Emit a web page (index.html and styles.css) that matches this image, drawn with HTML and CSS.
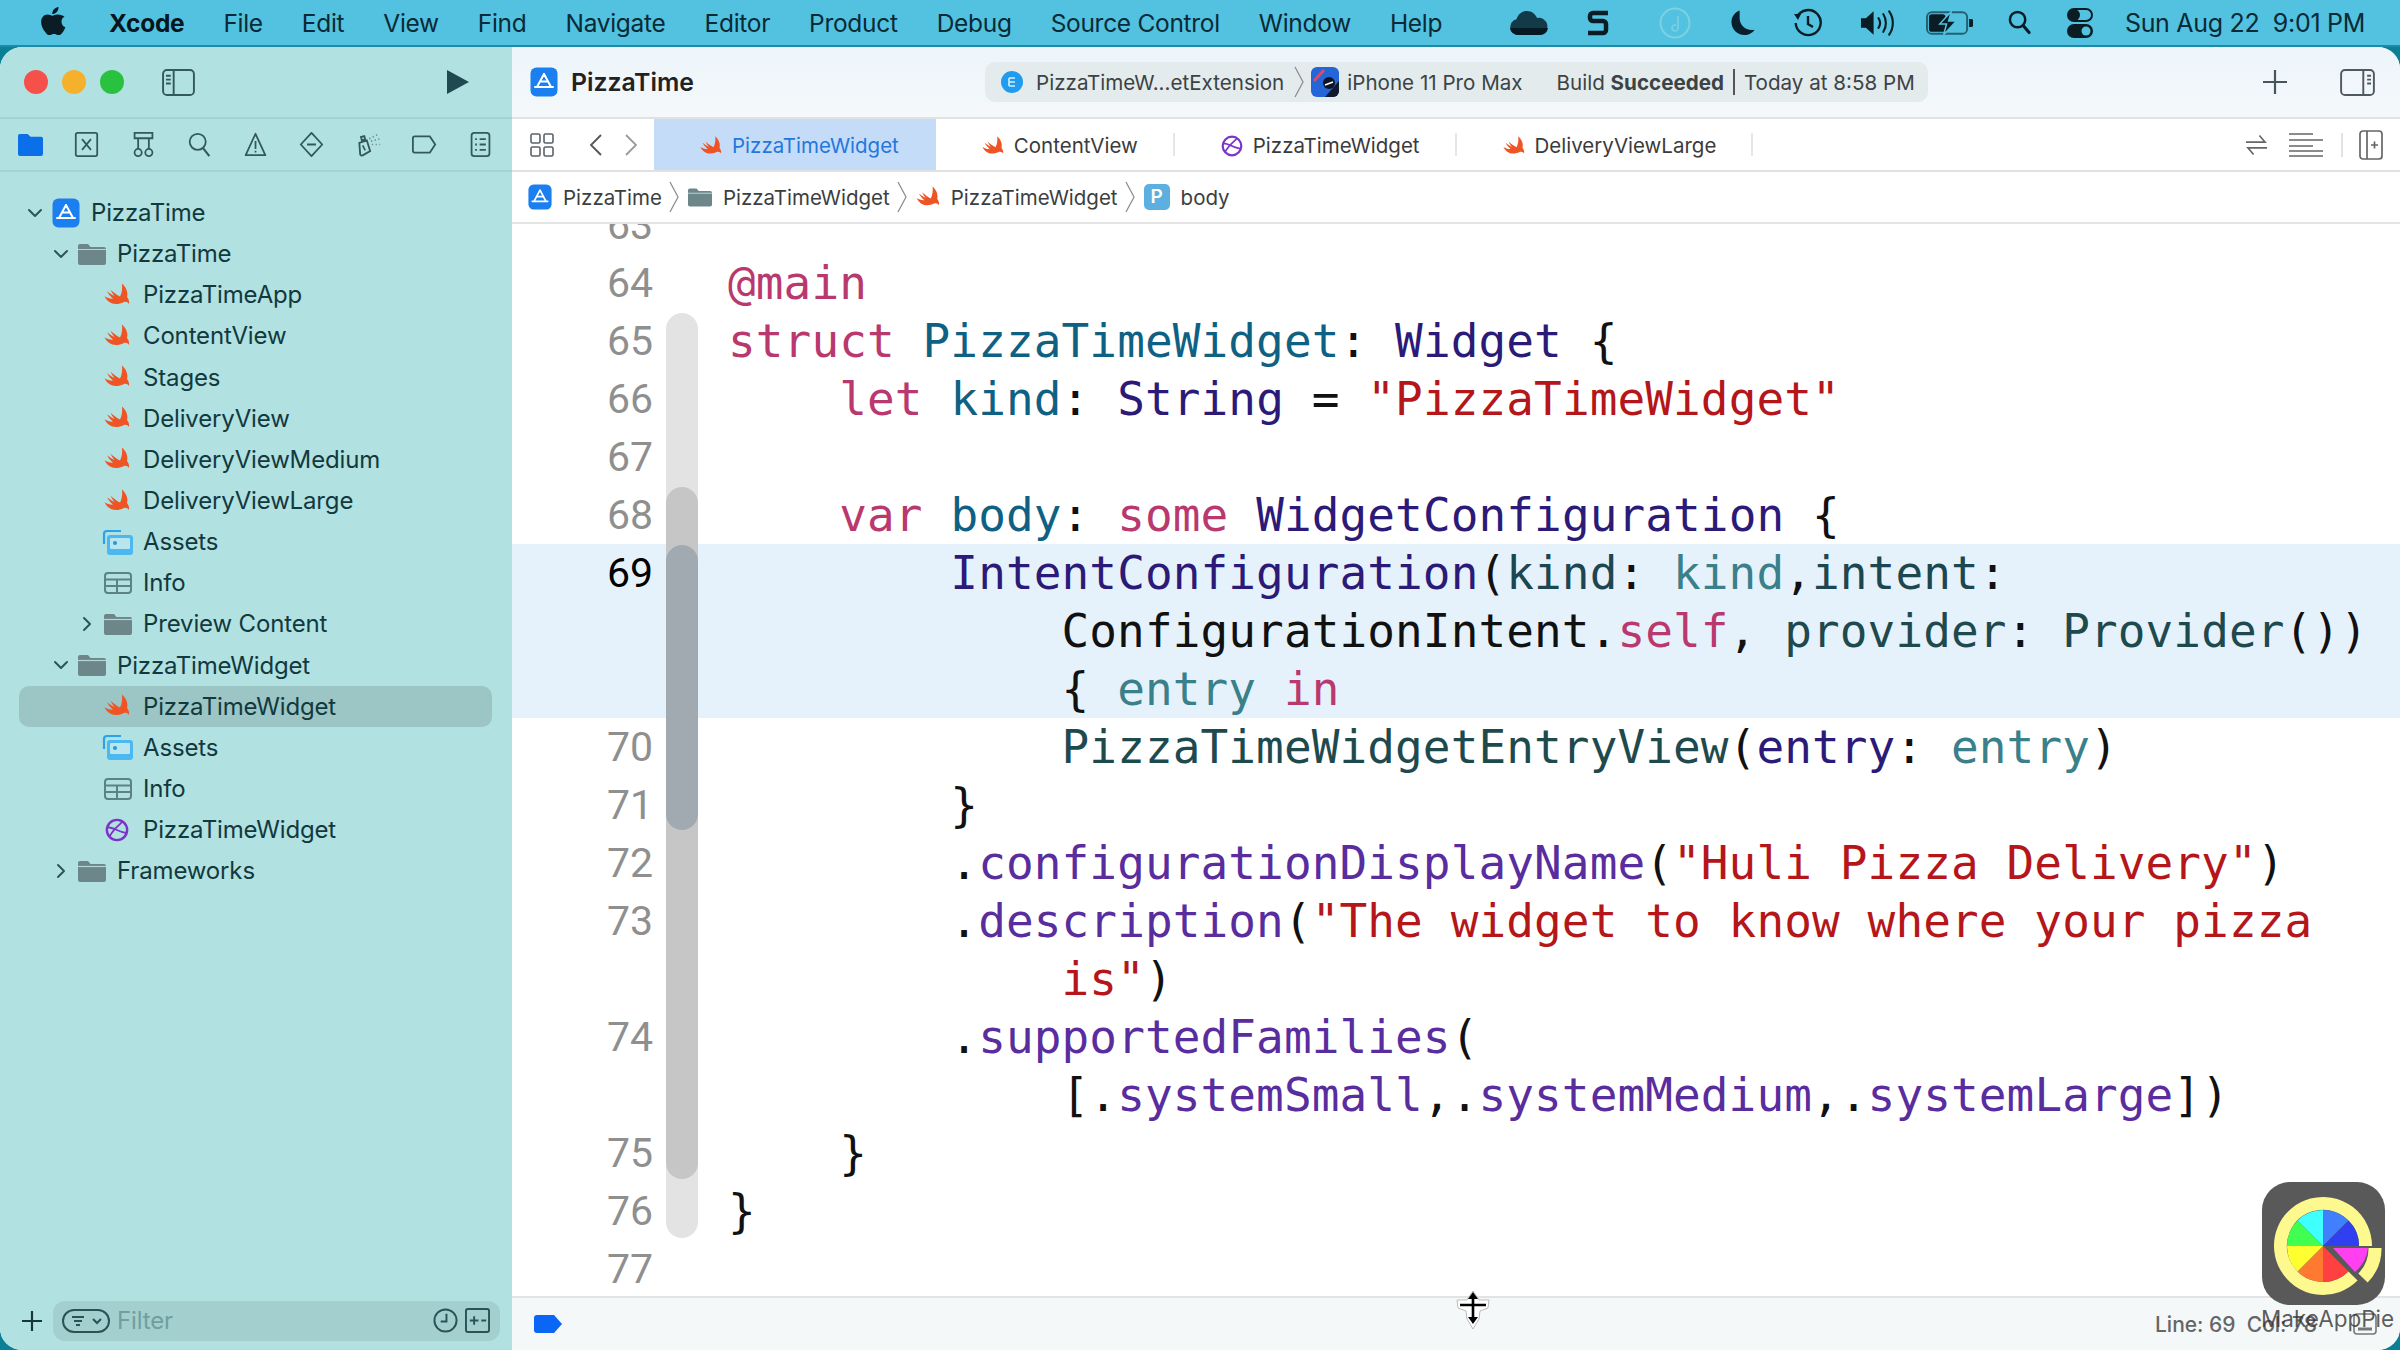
FILE: index.html
```html
<!DOCTYPE html>
<html lang="en">
<head>
    <meta charset="UTF-8">
    <link rel="stylesheet" href="styles.css">
    <title>PizzaTime - PizzaTimeWidget</title>
</head>
<body>
    <svg class="sprite" xmlns="http://www.w3.org/2000/svg">
        <symbol id="swift" viewBox="0 0 26 24">
            <path fill="#ee5424" d="M18 .5C22 4 24.500 9.500 23 14c1.500 2 2.500 4.500 2 7-1-2-3.500-2.800-5.500-1.800C15 21.500 9 21.800 5 18.800 3.200 17.400 1.800 15.600.5 13.200c2.500 1.600 5.500 2.600 8.500 2.400-2.500-2.100-4.500-4.600-6-7.300 2.500 2 5 3.700 7.500 4.900-1.700-2-3-4.200-4-6.400 3 2.700 6.300 5.200 9.500 6.800C18 10 18.500 5 18 .5z"/>
        </symbol>
        <symbol id="appicon" viewBox="0 0 28 30">
            <rect x="0.500" y="0.500" width="27" height="29" rx="6" fill="#1b7ff0"/>
            <path fill="none" stroke="#fff" stroke-width="2" stroke-linecap="round" d="M14 7l-7 13M14 7l7 13M5 20h18M10 14.500h8"/>
        </symbol>
        <symbol id="folder" viewBox="0 0 28 22">
            <path fill="#6d8689" d="M2 1h8l2.500 3H26a2 2 0 0 1 2 2v14a2 2 0 0 1-2 2H2a2 2 0 0 1-2-2V3a2 2 0 0 1 2-2z"/>
            <path fill="none" stroke="#b2d6d6" stroke-width="1.200" d="M0 6.500h28"/>
        </symbol>
        <symbol id="assets" viewBox="0 0 32 28">
            <path fill="none" stroke="#29a4ec" stroke-width="2.200" d="M2 16V6a3 3 0 0 1 3-3h14"/>
            <rect x="5" y="7" width="26" height="20" rx="3" fill="#4cb8f2"/>
            <rect x="8" y="10" width="20" height="11" rx="1" fill="#b8e5ee"/>
            <circle cx="13" cy="15" r="2" fill="#2795d8"/>
        </symbol>
        <symbol id="plist" viewBox="0 0 28 22">
            <rect x="1" y="1" width="26" height="20" rx="3" fill="none" stroke="#5c8286" stroke-width="2"/>
            <path fill="none" stroke="#5c8286" stroke-width="2" d="M1 7.500h26M1 14h26M13 7.500V21"/>
        </symbol>
        <symbol id="intent" viewBox="0 0 26 26">
            <circle cx="13" cy="13" r="11" fill="none" stroke="#7a34c8" stroke-width="2.600"/>
            <path fill="none" stroke="#7a34c8" stroke-width="2" d="M3 10c6 0 14 6 20 6M5 20C9 12 15 8 19 4"/>
        </symbol>
        <symbol id="chevdown" viewBox="0 0 16 10">
            <path fill="none" stroke="#2e5558" stroke-width="2" stroke-linecap="round" stroke-linejoin="round" d="M2 2l6 6 6-6"/>
        </symbol>
        <symbol id="chevright" viewBox="0 0 10 16">
            <path fill="none" stroke="#2e5558" stroke-width="2" stroke-linecap="round" stroke-linejoin="round" d="M2 2l6 6-6 6"/>
        </symbol>
        <symbol id="crumb" viewBox="0 0 10 32">
            <path fill="none" stroke="#8b8f91" stroke-width="1.300" d="M1 1l8 15-8 15"/>
        </symbol>
    </svg>

    <header class="menubar">
        <svg class="apple" viewBox="0 0 25 28"><path fill="#0a1d24" d="M17.500 0c.2 2-.6 3.700-1.700 5-1.200 1.300-2.800 2.200-4.500 2.100-.2-1.800.7-3.700 1.700-4.800C14.100 1 16 .1 17.500 0zM23.500 9.600c-1.700 1-3 2.900-3 5.100 0 2.700 1.600 4.600 3.900 5.500-.5 1.500-1.300 3-2.300 4.500-1.300 1.900-2.600 3.500-4.400 3.500-1.900 0-2.500-1.100-4.700-1.100s-2.900 1.100-4.600 1.100c-1.900 0-3.300-1.800-4.600-3.700C1.200 21.500 0 17.500.2 14.300.3 10.300 3 7.500 6.600 7.500c1.900 0 3.600 1.200 4.800 1.200 1.300 0 3.200-1.400 5.400-1.200 2.700.1 5 1.100 6.700 2.100z"/></svg>
        <nav class="menu">
            <span class="menu-app">Xcode</span>
            <span>File</span>
            <span>Edit</span>
            <span>View</span>
            <span>Find</span>
            <span>Navigate</span>
            <span>Editor</span>
            <span>Product</span>
            <span>Debug</span>
            <span>Source Control</span>
            <span>Window</span>
            <span>Help</span>
        </nav>
        <div class="status-icons">
            <svg class="si-cloud" viewBox="0 0 40 26"><path fill="#123a48" d="M9 25a8 8 0 0 1-1.500-15.800C9 4 13.500 1 18 1c4.600 0 8.400 2.800 10 7a8.500 8.500 0 0 1 3.500 17z"/><path fill="#061821" d="M9 25a8 8 0 0 1-8-7h38a8.500 8.500 0 0 1-7.500 7z"/></svg>
            <svg class="si-s" viewBox="0 0 22 26"><path fill="none" stroke="#0a1d24" stroke-width="4.500" stroke-linejoin="round" d="M21 3H6a3 3 0 0 0-3 3v2a3 3 0 0 0 3 3h10a3 3 0 0 1 3 3v6a3 3 0 0 1-3 3H1"/></svg>
            <svg class="si-music" viewBox="0 0 32 32"><circle cx="16" cy="16" r="14.500" fill="none" stroke="#7fd0e0" stroke-width="2"/><path fill="none" stroke="#7fd0e0" stroke-width="1.600" d="M19 9v12a3 3 0 1 1-2-2.800"/></svg>
            <svg class="si-moon" viewBox="0 0 26 28"><path fill="#07202c" d="M10 1C5 3 1.500 7.500 1.500 13c0 7.500 6 13.500 13.500 13.500 4.500 0 8.500-2.200 10.500-5.500-1 .3-2 .4-3 .4-7 0-12.500-5.500-12.500-12.500 0-2.800.1-5.300 0-7.900z"/></svg>
            <svg class="si-clock" viewBox="0 0 28 30"><path fill="none" stroke="#0a1d24" stroke-width="2.400" d="M3 9a12.500 12.500 0 1 1-1.300 6M14 8v8l5 3"/><path fill="#0a1d24" d="M0 6l7 0-3 6z"/></svg>
            <svg class="si-volume" viewBox="0 0 36 28"><path fill="#0a1d24" d="M1 9h5l8-7v24l-8-7H1z"/><path fill="none" stroke="#0a1d24" stroke-width="2.200" stroke-linecap="round" d="M19 9c2 3 2 7 0 10M24 5c3.500 5 3.500 13 0 18M30 2c5 7 5 17 0 24"/></svg>
            <svg class="si-battery" viewBox="0 0 48 26"><rect x="1" y="2" width="41" height="22" rx="5" fill="none" stroke="#24606f" stroke-width="2"/><rect x="3" y="4" width="17" height="18" rx="3" fill="#0a1d24"/><path fill="#0a1d24" d="M44 9h2a2 2 0 0 1 0 8h-2z"/><path fill="#0a1d24" stroke="#52c2e0" stroke-width="1.500" d="M26 1L14 14h7l-3 11 13-14h-8z"/></svg>
            <svg class="si-search" viewBox="0 0 24 26"><circle cx="10" cy="10" r="8" fill="none" stroke="#0a1d24" stroke-width="2.600"/><path stroke="#0a1d24" stroke-width="3.200" stroke-linecap="round" d="M16 16.500l6 7"/></svg>
            <svg class="si-control" viewBox="0 0 26 30"><rect x="1" y="1" width="24" height="12" rx="6" fill="none" stroke="#0a1d24" stroke-width="2"/><circle cx="7" cy="7" r="6" fill="#0a1d24"/><rect x="0" y="16" width="26" height="14" rx="7" fill="#0a1d24"/><circle cx="19" cy="23" r="4.500" fill="#52c2e0"/></svg>
            <span class="clock">Sun Aug 22&nbsp; 9:01 PM</span>
        </div>
    </header>

    <div class="window">
        <aside class="sidebar">
            <div class="side-toolbar">
                <div class="lights">
                    <i class="light red"></i>
                    <i class="light yellow"></i>
                    <i class="light green"></i>
                </div>
                <svg class="panel-btn" viewBox="0 0 34 28"><rect x="1" y="1" width="32" height="26" rx="4" fill="none" stroke="#33595c" stroke-width="2"/><path fill="none" stroke="#33595c" stroke-width="2" d="M12 1v26M4 7h5M4 11h5M4 15h5"/></svg>
                <svg class="play" viewBox="0 0 24 26"><path fill="#1f4a4f" d="M1 1l22 12L1 25z"/></svg>
            </div>
            <div class="nav-tabs">
                <svg viewBox="0 0 26 24"><path fill="#0a6fe8" d="M2 1h8l3 3h11a2 2 0 0 1 2 2v16a2 2 0 0 1-2 2H2a2 2 0 0 1-2-2V3a2 2 0 0 1 2-2z"/></svg>
                <svg viewBox="0 0 26 28"><rect x="1" y="1" width="24" height="26" rx="2" fill="none" stroke="#33595c" stroke-width="2"/><path fill="none" stroke="#33595c" stroke-width="2" d="M8 8l10 12M18 8L8 20"/></svg>
                <svg viewBox="0 0 26 28"><path fill="none" stroke="#33595c" stroke-width="2" d="M3 1h20v6H3zM7 7v12M19 7v12"/><circle cx="7" cy="23" r="4" fill="none" stroke="#33595c" stroke-width="2"/><circle cx="19" cy="23" r="4" fill="none" stroke="#33595c" stroke-width="2"/></svg>
                <svg viewBox="0 0 26 28"><circle cx="11" cy="11" r="9" fill="none" stroke="#33595c" stroke-width="2"/><path stroke="#33595c" stroke-width="2.400" d="M17 18l7 9"/></svg>
                <svg viewBox="0 0 26 28"><path fill="none" stroke="#33595c" stroke-width="2" stroke-linejoin="round" d="M13 2l11 24H2z"/><path stroke="#33595c" stroke-width="2" d="M13 10v9M13 21v2"/></svg>
                <svg viewBox="0 0 26 28"><path fill="none" stroke="#33595c" stroke-width="2" stroke-linejoin="round" d="M13 1l12 13-12 13L1 14z"/><path stroke="#33595c" stroke-width="2" d="M8 14h10"/></svg>
                <svg viewBox="0 0 30 28"><path fill="none" stroke="#33595c" stroke-width="2.200" d="M4 12l9-3 4 13-9 5a2 2 0 0 1-3-1.500zM7 9l4-1-1-4-4 1z"/><path stroke="#33595c" stroke-width="2" d="M8 15l3 6"/><path fill="none" stroke="#6b8f92" stroke-width="2" stroke-dasharray="1.500 3" d="M16 7l12-6M18 10l11-3M19 14l10 0"/></svg>
                <svg viewBox="0 0 28 24"><path fill="none" stroke="#33595c" stroke-width="2" d="M3 3h17l6 9-6 9H3a2 2 0 0 1-2-2V5a2 2 0 0 1 2-2z"/></svg>
                <svg viewBox="0 0 22 28"><rect x="1" y="1" width="20" height="26" rx="3" fill="none" stroke="#33595c" stroke-width="2"/><path stroke="#33595c" stroke-width="2" d="M5 8h2M5 14h2M5 20h2M10 8h7M10 14h7M10 20h7"/></svg>
            </div>
            <ul class="tree">
                <li class="row">
                    <span class="chev"><svg class="down"><use href="#chevdown"/></svg></span>
                    <svg class="ico ico-app"><use href="#appicon"/></svg>PizzaTime
                </li>
                <li class="row lvl1">
                    <span class="chev"><svg class="down"><use href="#chevdown"/></svg></span>
                    <svg class="ico ico-folder"><use href="#folder"/></svg>PizzaTime
                </li>
                <li class="row lvl2"><span class="chev"></span><svg class="ico"><use href="#swift"/></svg>PizzaTimeApp</li>
                <li class="row lvl2"><span class="chev"></span><svg class="ico"><use href="#swift"/></svg>ContentView</li>
                <li class="row lvl2"><span class="chev"></span><svg class="ico"><use href="#swift"/></svg>Stages</li>
                <li class="row lvl2"><span class="chev"></span><svg class="ico"><use href="#swift"/></svg>DeliveryView</li>
                <li class="row lvl2"><span class="chev"></span><svg class="ico"><use href="#swift"/></svg>DeliveryViewMedium</li>
                <li class="row lvl2"><span class="chev"></span><svg class="ico"><use href="#swift"/></svg>DeliveryViewLarge</li>
                <li class="row lvl2"><span class="chev"></span><svg class="ico ico-assets"><use href="#assets"/></svg>Assets</li>
                <li class="row lvl2"><span class="chev"></span><svg class="ico ico-folder"><use href="#plist"/></svg>Info</li>
                <li class="row lvl2">
                    <span class="chev"><svg class="right"><use href="#chevright"/></svg></span>
                    <svg class="ico ico-folder"><use href="#folder"/></svg>Preview Content
                </li>
                <li class="row lvl1">
                    <span class="chev"><svg class="down"><use href="#chevdown"/></svg></span>
                    <svg class="ico ico-folder"><use href="#folder"/></svg>PizzaTimeWidget
                </li>
                <li class="row lvl2 selected"><span class="chev"></span><svg class="ico"><use href="#swift"/></svg>PizzaTimeWidget</li>
                <li class="row lvl2"><span class="chev"></span><svg class="ico ico-assets"><use href="#assets"/></svg>Assets</li>
                <li class="row lvl2"><span class="chev"></span><svg class="ico ico-folder"><use href="#plist"/></svg>Info</li>
                <li class="row lvl2"><span class="chev"></span><svg class="ico"><use href="#intent"/></svg>PizzaTimeWidget</li>
                <li class="row lvl1">
                    <span class="chev"><svg class="right"><use href="#chevright"/></svg></span>
                    <svg class="ico ico-folder"><use href="#folder"/></svg>Frameworks
                </li>
            </ul>
            <div class="filter-bar">
                <svg class="filter-plus" viewBox="0 0 20 20"><path stroke="#16383c" stroke-width="2.200" d="M10 0v20M0 10h20"/></svg>
                <div class="filter-field">
                    <svg class="filter-pill" viewBox="0 0 48 24"><rect x="1" y="1" width="46" height="22" rx="11" fill="none" stroke="#2b5256" stroke-width="2"/><path stroke="#2b5256" stroke-width="2" d="M10 8h12M12 12h8M14 16h4"/><path fill="none" stroke="#2b5256" stroke-width="2" d="M31 10l4 4 4-4"/></svg>
                    <span class="filter-text">Filter</span>
                    <svg class="filter-clock" viewBox="0 0 26 26"><circle cx="13" cy="13" r="11.500" fill="none" stroke="#2b5256" stroke-width="2"/><path fill="none" stroke="#2b5256" stroke-width="2" d="M14 6v8H8"/></svg>
                    <svg class="filter-add" viewBox="0 0 26 26"><rect x="1" y="1" width="24" height="24" rx="2" fill="none" stroke="#2b5256" stroke-width="2"/><path stroke="#2b5256" stroke-width="2" d="M5 13h9M9.500 8.500v9M17 13h5"/></svg>
                </div>
            </div>
        </aside>

        <main class="main">
            <div class="toolbar">
                <div class="project">
                    <svg class="ico-app"><use href="#appicon"/></svg>
                    <span class="project-name">PizzaTime</span>
                </div>
                <div class="activity">
                    <svg class="ext-badge" viewBox="0 0 22 22"><circle cx="11" cy="11" r="11" fill="#1f9cf0"/><path stroke="#d6effc" stroke-width="1.600" d="M8 7h6M8 11h6M8 15h6M8 7v8"/></svg>
                    <span class="scheme">PizzaTimeW...etExtension</span>
                    <svg class="crumb"><use href="#crumb"/></svg>
                    <svg class="device" viewBox="0 0 28 30"><rect width="28" height="30" rx="6" fill="#2465d8"/><path fill="#111a2c" d="M14 30l14-16v10a6 6 0 0 1-6 6z"/><path stroke="#d64d6a" stroke-width="3" d="M3 14L13 3"/><circle cx="18" cy="16" r="6" fill="#0d1424"/><path stroke="#fff" stroke-width="1.500" d="M14 18l8-3"/></svg>
                    <span class="device-name">iPhone 11 Pro Max</span>
                    <span class="build">Build <b>Succeeded</b></span>
                    <i class="build-sep"></i>
                    <span>Today at 8:58 PM</span>
                </div>
                <svg class="tool-plus" viewBox="0 0 24 24"><path stroke="#47565a" stroke-width="2.200" d="M12 0v24M0 12h24"/></svg>
                <svg class="panel-btn" viewBox="0 0 36 28"><rect x="1" y="1" width="34" height="26" rx="4" fill="none" stroke="#4f5a5e" stroke-width="2"/><path fill="none" stroke="#4f5a5e" stroke-width="2" d="M24 1v26M28 7h4M28 11h4M28 15h4"/></svg>
            </div>

            <div class="tabs">
                <svg class="tab-grid" viewBox="0 0 24 24"><g fill="none" stroke="#5a6266" stroke-width="1.600"><rect x="1" y="1" width="9" height="9" rx="1.500"/><rect x="14" y="1" width="9" height="9" rx="1.500"/><rect x="1" y="14" width="9" height="9" rx="1.500"/><rect x="14" y="14" width="9" height="9" rx="1.500"/></g></svg>
                <svg class="tab-back" viewBox="0 0 14 24"><path fill="none" stroke="#555" stroke-width="1.800" d="M12 2L2 12l10 10"/></svg>
                <svg class="tab-fwd" viewBox="0 0 14 24"><path fill="none" stroke="#9a9a9a" stroke-width="1.800" d="M2 2l10 10L2 22"/></svg>
                <div class="tab active"><svg><use href="#swift"/></svg>PizzaTimeWidget</div>
                <div class="tab"><svg><use href="#swift"/></svg>ContentView</div>
                <div class="tab"><svg><use href="#intent"/></svg>PizzaTimeWidget</div>
                <div class="tab"><svg><use href="#swift"/></svg>DeliveryViewLarge</div>
                <div class="tab-tools">
                    <svg class="tool-swap" viewBox="0 0 24 24"><path fill="none" stroke="#666" stroke-width="1.700" d="M1 9h20l-6-7M23 15H3l6 7"/></svg>
                    <svg class="tool-lines" viewBox="0 0 34 24"><path stroke="#666" stroke-width="1.700" d="M0 1h24M0 7h34M0 13h24M0 18h34M0 23h34"/></svg>
                    <i class="tool-sep"></i>
                    <svg class="tool-add" viewBox="0 0 24 30"><rect x="1" y="1" width="22" height="28" rx="3" fill="none" stroke="#666" stroke-width="1.700"/><path fill="none" stroke="#666" stroke-width="1.700" d="M8 1v28M12 15h7M15.500 11.500v7"/></svg>
                </div>
            </div>

            <div class="jumpbar">
                <svg class="jump-app"><use href="#appicon"/></svg>
                <span>PizzaTime</span>
                <svg class="crumb"><use href="#crumb"/></svg>
                <svg class="jump-folder"><use href="#folder"/></svg>
                <span>PizzaTimeWidget</span>
                <svg class="crumb"><use href="#crumb"/></svg>
                <svg class="jump-swift"><use href="#swift"/></svg>
                <span>PizzaTimeWidget</span>
                <svg class="crumb"><use href="#crumb"/></svg>
                <i class="prop-badge">P</i>
                <span>body</span>
            </div>

            <div class="editor">
                <div class="ribbon">
                    <div class="fold-outer">
                        <div class="fold-mid">
                            <div class="fold-inner"></div>
                        </div>
                    </div>
                </div>
                <div class="code">
                    <div class="line"><span class="num">63</span><pre></pre></div>
                    <div class="line"><span class="num">64</span><pre><span class="kw">@main</span></pre></div>
                    <div class="line"><span class="num">65</span><pre><span class="kw">struct</span> <span class="decl">PizzaTimeWidget</span>: <span class="ty">Widget</span> {</pre></div>
                    <div class="line"><span class="num">66</span><pre>    <span class="kw">let</span> <span class="decl">kind</span>: <span class="ty">String</span> = <span class="str">"PizzaTimeWidget"</span></pre></div>
                    <div class="line"><span class="num">67</span><pre></pre></div>
                    <div class="line"><span class="num">68</span><pre>    <span class="kw">var</span> <span class="decl">body</span>: <span class="kw">some</span> <span class="ty">WidgetConfiguration</span> {</pre></div>
                    <div class="line current"><span class="num">69</span><pre>        <span class="ty">IntentConfiguration</span>(<span class="lbl">kind</span>: <span class="ref">kind</span>,<span class="lbl">intent</span>:
            ConfigurationIntent.<span class="kw">self</span>, <span class="proj">provider</span>: <span class="proj">Provider</span>())
            { <span class="ref">entry</span> <span class="kw">in</span></pre></div>
                    <div class="line"><span class="num">70</span><pre>            <span class="proj">PizzaTimeWidgetEntryView</span>(<span class="ty">entry</span>: <span class="ref">entry</span>)</pre></div>
                    <div class="line"><span class="num">71</span><pre>        }</pre></div>
                    <div class="line"><span class="num">72</span><pre>        .<span class="fn">configurationDisplayName</span>(<span class="str">"Huli Pizza Delivery"</span>)</pre></div>
                    <div class="line"><span class="num">73</span><pre>        .<span class="fn">description</span>(<span class="str">"The widget to know where your pizza
            is"</span>)</pre></div>
                    <div class="line"><span class="num">74</span><pre>        .<span class="fn">supportedFamilies</span>(
            [.<span class="fn">systemSmall</span>,.<span class="fn">systemMedium</span>,.<span class="fn">systemLarge</span>])</pre></div>
                    <div class="line"><span class="num">75</span><pre>    }</pre></div>
                    <div class="line"><span class="num">76</span><pre>}</pre></div>
                    <div class="line"><span class="num">77</span><pre></pre></div>
                </div>
            </div>

            <footer class="statusbar">
                <svg class="tag" viewBox="0 0 28 18"><path fill="#0a66f5" d="M3 0h17l8 9-8 9H3a3 3 0 0 1-3-3V3a3 3 0 0 1 3-3z"/></svg>
                <span class="position">Line: 69&nbsp; Col: 78</span>
                <svg class="minimap" viewBox="0 0 24 22"><rect x="1" y="1" width="22" height="20" rx="3" fill="none" stroke="#777" stroke-width="1.600"/><path stroke="#777" stroke-width="3" d="M5 16h14"/></svg>
            </footer>
        </main>
    </div>

    <svg class="cursor" viewBox="0 0 34 40">
        <path fill="#fff" stroke="#bbb" d="M17 1l6 9h10l-1 8-8 3-1 8-6 10-6-10-1-8-8-3-1-8h10z"/>
        <path stroke="#000" stroke-width="2.600" d="M4 15h26M17 5v26"/>
        <path fill="#000" d="M17 2l5 7H12zM17 34l5-7H12z"/>
    </svg>
    <div class="watermark">
        <svg viewBox="0 0 123 123">
            <rect width="123" height="123" rx="28" fill="#595959"/>
            <path fill="none" stroke="#fdf98f" stroke-width="13" d="M103.500 64A42.500 42.500 0 1 0 91 94"/>
            <path fill="none" stroke="#fdf98f" stroke-width="13" d="M113 66A42 42 0 0 1 101 96"/>
            <path fill="#4080ff" d="M61 64V28A36 36 0 0 1 86.500 38.500z"/>
            <path fill="#3040f0" d="M61 64L86.500 38.500A36 36 0 0 1 97 64z"/>
            <path fill="#ff3ff0" d="M71 66h35A36 36 0 0 1 93 90z"/>
            <path fill="#ff4040" d="M61 64L86.500 89.500A36 36 0 0 1 61 100z"/>
            <path fill="#ff7a30" d="M61 64v36A36 36 0 0 1 35.500 89.500z"/>
            <path fill="#ffff30" d="M61 64L35.500 89.500A36 36 0 0 1 25 64z"/>
            <path fill="#40ff50" d="M61 64H25A36 36 0 0 1 35.500 38.500z"/>
            <path fill="#40ffff" d="M61 64L35.500 38.500A36 36 0 0 1 61 28z"/>
        </svg>
        <span>MakeAppPie</span>
    </div>
</body>
</html>
```

FILE: styles.css
```css
* {
    margin: 0;
    padding: 0;
    box-sizing: border-box;
}
html, body {
    width: 2400px;
    height: 1350px;
    overflow: hidden;
}
body {
    display: flex;
    flex-direction: column;
    position: relative;
    background-color: #0b7f95;
    font-family: Inter, "Noto Sans", sans-serif;
    color: #222;
}
svg {
    display: block;
    flex-shrink: 0;
}
i {
    font-style: normal;
}
.sprite {
    display: none;
}

/* menu bar */
.menubar {
    display: flex;
    align-items: center;
    height: 47px;
    padding: 0 35px 0 41px;
    background-color: #52c2e0;
    border-bottom: 2px solid #1d8aa6;
    color: #0a2a36;
    font-size: 24.5px;
    white-space: nowrap;
}
.apple {
    width: 25px;
    height: 28px;
    margin-top: -4px;
}
.menu {
    display: flex;
    gap: 39px;
    margin-left: 43px;
}
.menu span {
    letter-spacing: -0.3px;
}
.menu-app {
    font-weight: 700;
    color: #07161c;
}
.status-icons {
    display: flex;
    align-items: center;
    margin-left: auto;
}
.si-cloud { width: 40px; height: 26px; }
.si-s { width: 22px; height: 26px; margin-left: 38px; }
.si-music { width: 32px; height: 32px; margin-left: 50px; }
.si-moon { width: 25px; height: 28px; margin-left: 39px; }
.si-clock { width: 28px; height: 30px; margin-left: 39px; }
.si-volume { width: 35px; height: 28px; margin-left: 38px; }
.si-battery { width: 47px; height: 26px; margin-left: 31px; }
.si-search { width: 23px; height: 25px; margin-left: 35px; }
.si-control { width: 26px; height: 30px; margin-left: 36px; }
.clock {
    margin-left: 32px;
    font-size: 25px;
    letter-spacing: -0.3px;
}

.window {
    flex: 1;
    display: flex;
    min-height: 0;
    border-radius: 22px;
    overflow: hidden;
    background-color: #fff;
}

/* sidebar */
.sidebar {
    width: 512px;
    display: flex;
    flex-direction: column;
    background-color: #b2e1e1;
    color: #11393e;
    font-size: 24px;
    letter-spacing: -0.15px;
}
.side-toolbar {
    display: flex;
    align-items: center;
    height: 72px;
    padding: 0 42px 0 24px;
    border-bottom: 2px solid #a5d3d3;
}
.lights {
    display: flex;
    gap: 14px;
}
.light {
    width: 24px;
    height: 24px;
    border-radius: 50%;
}
.red { background-color: #f5504a; }
.yellow { background-color: #f6b12c; }
.green { background-color: #29c23f; }
.side-toolbar .panel-btn {
    width: 33px;
    height: 27px;
    margin-left: 38px;
}
.play {
    width: 24px;
    height: 26px;
    margin-left: auto;
}
.nav-tabs {
    display: flex;
    justify-content: space-between;
    align-items: center;
    height: 53px;
    padding: 0 19px 0 18px;
    border-bottom: 2px solid #a5d3d3;
}
.nav-tabs svg {
    width: 25px;
    height: 25px;
}
.tree {
    flex: 1;
    list-style: none;
    padding: 20px 20px 0 19px;
}
.row {
    display: flex;
    align-items: center;
    height: 41.15px;
    padding-left: 5px;
    white-space: nowrap;
}
.lvl1 { padding-left: 31px; }
.lvl2 { padding-left: 57px; }
.selected {
    background-color: #9cc5c5;
    border-radius: 10px;
}
.chev {
    display: flex;
    align-items: center;
    width: 28px;
    height: 100%;
}
.down {
    width: 16px;
    height: 10px;
    margin-left: 3px;
}
.right {
    width: 10px;
    height: 16px;
    margin-left: 6px;
}
.ico {
    width: 26px;
    height: 24px;
    margin: 0 13px 0 0;
}
.ico-app {
    width: 28px;
    height: 30px;
}
.row .ico-app {
    margin-right: 11px;
}
.row .ico-folder {
    width: 28px;
    height: 22px;
    margin-right: 11px;
}
.row .ico-assets {
    width: 32px;
    height: 28px;
    margin: 0 9px 0 -2px;
}
.filter-bar {
    display: flex;
    align-items: center;
    height: 53px;
    padding: 0 12px 6px 22px;
}
.filter-plus {
    width: 20px;
    height: 20px;
}
.filter-field {
    flex: 1;
    display: flex;
    align-items: center;
    height: 40px;
    margin-left: 11px;
    padding: 0 10px 0 9px;
    background-color: #a3cfcf;
    border-radius: 12px;
}
.filter-pill {
    width: 48px;
    height: 24px;
}
.filter-text {
    margin-left: 7px;
    color: #6f9f9f;
    font-size: 24px;
}
.filter-clock {
    width: 25px;
    height: 25px;
    margin-left: auto;
}
.filter-add {
    width: 25px;
    height: 25px;
    margin-left: 7px;
}

/* main column */
.main {
    flex: 1;
    min-width: 0;
    display: flex;
    flex-direction: column;
}
.toolbar {
    display: flex;
    align-items: center;
    height: 72px;
    padding: 0 25px 0 18px;
    background: linear-gradient(#edf5fa, #f4f8fa);
    border-bottom: 2px solid #dfe3e4;
}
.project {
    display: flex;
    align-items: center;
    width: 455px;
}
.project-name {
    margin-left: 13px;
    font-size: 24.8px;
    font-weight: 600;
}
.activity {
    display: flex;
    align-items: center;
    width: 943px;
    height: 40px;
    padding-left: 16px;
    background-color: #e3ebec;
    border-radius: 10px;
    color: #3c4345;
    font-size: 20.6px;
    white-space: nowrap;
}
.ext-badge {
    width: 22px;
    height: 22px;
}
.scheme {
    margin-left: 13px;
}
.crumb {
    width: 10px;
    height: 32px;
    margin: 0 9px 0 7px;
}
.activity .crumb {
    margin: 0 10px;
}
.device {
    width: 28px;
    height: 30px;
    margin-left: -3px;
}
.device-name {
    margin-left: 8px;
}
.build {
    margin-left: 34px;
}
.build b {
    font-weight: 700;
}
.build-sep {
    flex-shrink: 0;
    width: 2px;
    height: 26px;
    margin: 0 9px;
    background-color: #555;
}
.tool-plus {
    width: 24px;
    height: 24px;
    margin-left: auto;
}
.toolbar .panel-btn {
    width: 35px;
    height: 27px;
    margin-left: 53px;
}

/* tabs */
.tabs {
    display: flex;
    align-items: center;
    height: 53px;
    padding-left: 18px;
    background-color: #fff;
    border-bottom: 2px solid #e1e1e1;
    font-size: 20.5px;
    color: #3b3b3b;
}
.tab-grid {
    width: 24px;
    height: 24px;
}
.tab-back {
    width: 14px;
    height: 24px;
    margin-left: 35px;
}
.tab-fwd {
    width: 14px;
    height: 24px;
    margin: 0 16px 0 21px;
}
.tab {
    display: flex;
    align-items: center;
    height: 100%;
    padding: 2px 37px 0 46px;
    white-space: nowrap;
    position: relative;
}
.tab svg {
    width: 22px;
    height: 22px;
    margin-right: 10px;
}
.tab + .tab::after {
    content: "";
    position: absolute;
    right: 0;
    top: 14px;
    bottom: 14px;
    width: 2px;
    background-color: #e6e6e6;
}
.active {
    background-color: #c5dcf8;
    color: #2477dc;
}
.tab-tools {
    display: flex;
    align-items: center;
    margin-left: auto;
    padding-right: 17px;
}
.tool-swap { width: 23px; height: 24px; }
.tool-lines { width: 34px; height: 24px; margin-left: 21px; }
.tool-sep { width: 2px; height: 24px; margin-left: 18px; background-color: #e3e3e3; }
.tool-add { width: 24px; height: 30px; margin-left: 16px; }

/* jump bar */
.jumpbar {
    display: flex;
    align-items: center;
    height: 52px;
    padding-left: 16px;
    background-color: #fff;
    border-bottom: 2px solid #e4e4e4;
    font-size: 20.5px;
    color: #3b3f41;
}
.jump-app {
    width: 24px;
    height: 26px;
    margin-right: 11px;
}
.jump-folder {
    width: 24px;
    height: 20px;
    margin-right: 11px;
}
.jump-swift {
    width: 24px;
    height: 22px;
    margin-right: 11px;
}
.prop-badge {
    width: 26px;
    height: 26px;
    margin-right: 11px;
    background-color: #5bb0e0;
    border-radius: 5px;
    color: #fff;
    font-size: 19px;
    font-weight: 600;
    line-height: 26px;
    text-align: center;
}

/* editor */
.editor {
    flex: 1;
    min-height: 0;
    position: relative;
    overflow: hidden;
    background-color: #fff;
}
.code {
    margin-top: -28px;
}
.line {
    display: flex;
}
.num {
    width: 141px;
    flex-shrink: 0;
    text-align: right;
    color: #8f8f8f;
    font-family: Roboto, sans-serif;
    font-size: 41px;
    line-height: 58px;
}
pre {
    min-height: 58px;
    margin-left: 75px;
    font-family: "DejaVu Sans Mono", monospace;
    font-size: 46px;
    letter-spacing: 0.1px;
    line-height: 58px;
    color: #111;
}
.current {
    background-color: #e6f2fb;
}
.current .num {
    color: #000;
}
.kw { color: #b9396f; }
.decl { color: #0f6184; }
.ty { color: #2c1a78; }
.str { color: #b5161a; }
.fn { color: #5a2d9e; }
.ref { color: #3a808a; }
.proj { color: #1e4a4e; }
.lbl { color: #1c4650; }

/* fold ribbon sits over the gutter */
.ribbon {
    position: absolute;
    left: 154px;
    top: 89px;
    width: 32px;
    z-index: 1;
}
.fold-outer {
    height: 925px;
    padding: 174px 0 59px;
    background-color: #e3e3e3;
    border-radius: 16px;
}
.fold-mid {
    height: 692px;
    padding-top: 58px;
    background-color: #c6c6c6;
    border-radius: 16px;
}
.fold-inner {
    height: 285px;
    background-color: #a0aab0;
    border-radius: 16px;
}

/* status bar */
.statusbar {
    display: flex;
    align-items: center;
    height: 54px;
    padding: 0 23px 0 22px;
    background-color: #f5f8f9;
    border-top: 2px solid #e1e3e4;
    color: #666;
    font-size: 21px;
    font-weight: 500;
}
.tag {
    width: 28px;
    height: 18px;
}
.position {
    margin-left: auto;
}
.minimap {
    width: 24px;
    height: 22px;
    margin-left: 36px;
}

/* overlays */
.cursor {
    position: absolute;
    left: 1456px;
    top: 1290px;
    width: 34px;
    height: 40px;
}
.watermark {
    position: absolute;
    left: 2261px;
    top: 1182px;
    width: 130px;
}
.watermark svg {
    width: 123px;
    height: 123px;
    margin-left: 1px;
}
.watermark span {
    display: block;
    color: rgba(50, 50, 50, 0.8);
    font-size: 22.5px;
    white-space: nowrap;
}
```
